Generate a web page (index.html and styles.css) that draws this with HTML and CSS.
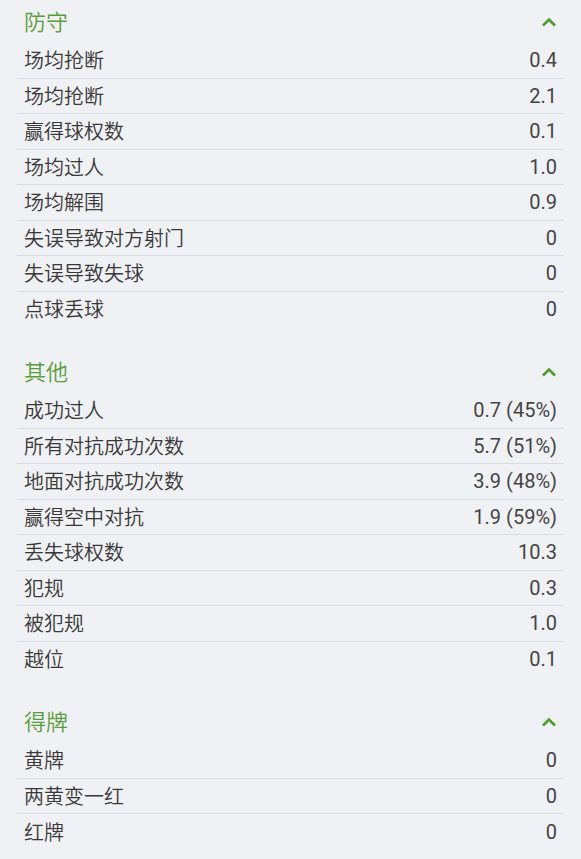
FILE: index.html
```html
<!DOCTYPE html>
<html lang="zh">
<head>
<meta charset="utf-8">
<link rel="stylesheet" href="styles.css">
</head>
<body>
<div class="page">
  <section class="group">
    <div class="head"><span class="title">防守</span><svg class="chev" width="16" height="10" viewBox="0 0 16 10"><path d="M2 8.5 L8 2.5 L14 8.5" fill="none" stroke="#4c9a2a" stroke-width="2.6"/></svg></div>
    <div class="row"><span class="label">场均抢断</span><span class="val">0.4</span></div>
    <div class="row"><span class="label">场均抢断</span><span class="val">2.1</span></div>
    <div class="row"><span class="label">赢得球权数</span><span class="val">0.1</span></div>
    <div class="row"><span class="label">场均过人</span><span class="val">1.0</span></div>
    <div class="row"><span class="label">场均解围</span><span class="val">0.9</span></div>
    <div class="row"><span class="label">失误导致对方射门</span><span class="val">0</span></div>
    <div class="row"><span class="label">失误导致失球</span><span class="val">0</span></div>
    <div class="row"><span class="label">点球丢球</span><span class="val">0</span></div>
  </section>
  <section class="group">
    <div class="head"><span class="title">其他</span><svg class="chev" width="16" height="10" viewBox="0 0 16 10"><path d="M2 8.5 L8 2.5 L14 8.5" fill="none" stroke="#4c9a2a" stroke-width="2.6"/></svg></div>
    <div class="row"><span class="label">成功过人</span><span class="val">0.7 (45%)</span></div>
    <div class="row"><span class="label">所有对抗成功次数</span><span class="val">5.7 (51%)</span></div>
    <div class="row"><span class="label">地面对抗成功次数</span><span class="val">3.9 (48%)</span></div>
    <div class="row"><span class="label">赢得空中对抗</span><span class="val">1.9 (59%)</span></div>
    <div class="row"><span class="label">丢失球权数</span><span class="val">10.3</span></div>
    <div class="row"><span class="label">犯规</span><span class="val">0.3</span></div>
    <div class="row"><span class="label">被犯规</span><span class="val">1.0</span></div>
    <div class="row"><span class="label">越位</span><span class="val">0.1</span></div>
  </section>
  <section class="group">
    <div class="head"><span class="title">得牌</span><svg class="chev" width="16" height="10" viewBox="0 0 16 10"><path d="M2 8.5 L8 2.5 L14 8.5" fill="none" stroke="#4c9a2a" stroke-width="2.6"/></svg></div>
    <div class="row"><span class="label">黄牌</span><span class="val">0</span></div>
    <div class="row"><span class="label">两黄变一红</span><span class="val">0</span></div>
    <div class="row"><span class="label">红牌</span><span class="val">0</span></div>
  </section>
</div>
</body>
</html>
```
FILE: styles.css
```css
html, body {
  margin: 0;
  padding: 0;
  background: #f0f1f5;
}
.page {
  padding: 0 17px;
  display: flex;
  flex-direction: column;
  gap: 23px;
  font-family: "Noto Sans CJK SC", "Noto Sans", sans-serif;
  color: #383838;
}
.group {
  display: flex;
  flex-direction: column;
}
.head {
  height: 43px;
  display: flex;
  align-items: center;
  justify-content: space-between;
  padding: 0 7px;
}
.title {
  font-size: 22px;
  font-weight: 350;
  color: #5a9e3c;
  line-height: 1;
  padding-bottom: 3px;
}
.chev {
  display: block;
}
.row {
  box-sizing: border-box;
  height: 35.5px;
  display: flex;
  align-items: center;
  justify-content: space-between;
  padding: 0 7px;
  border-bottom: 1.5px solid #dadbe0;
}
.row:last-child {
  border-bottom: none;
}
.label {
  font-size: 20px;
  font-weight: 350;
  line-height: 1;
}
.val {
  font-family: Roboto, "Liberation Sans", sans-serif;
  font-size: 20px;
  line-height: 1;
  color: #444;
}
```
